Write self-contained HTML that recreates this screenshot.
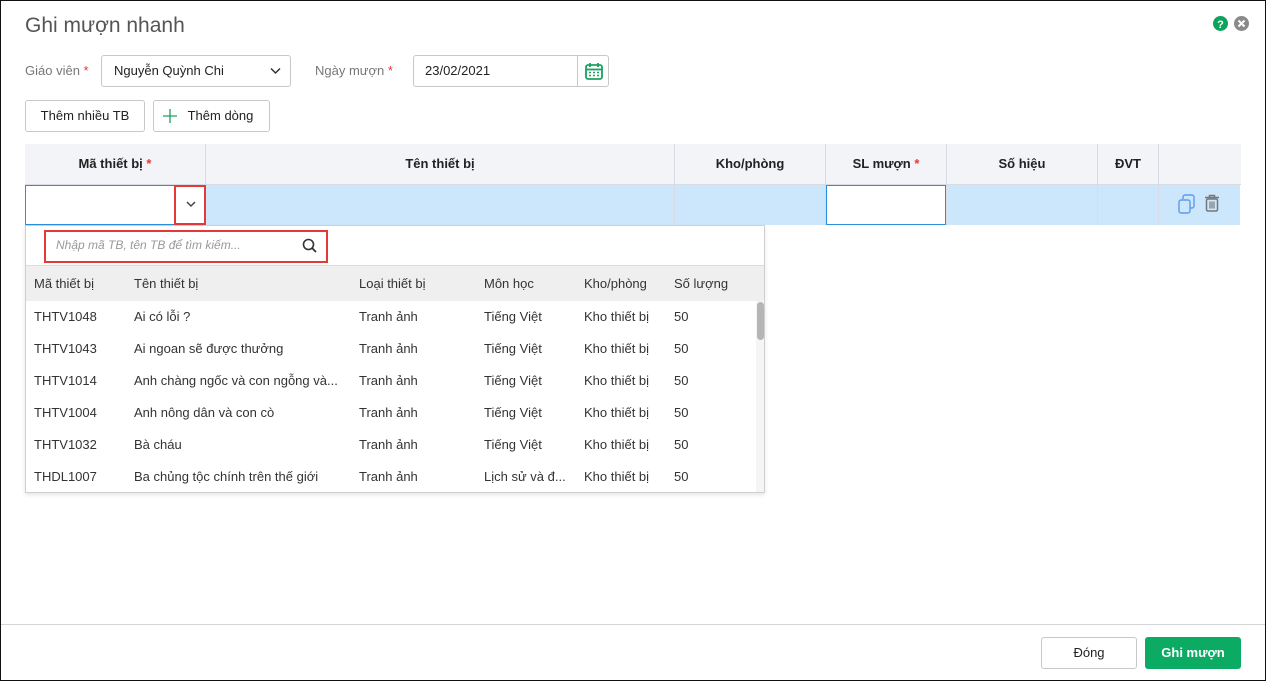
<!DOCTYPE html>
<html><head><meta charset="utf-8"><style>
*{box-sizing:border-box;margin:0;padding:0}
body{width:1266px;height:681px;overflow:hidden;background:#fff;font-family:"Liberation Sans","DejaVu Sans",sans-serif;font-size:13px;color:#212121;position:relative}
.a{position:absolute}
.frame{left:0;top:0;width:1266px;height:681px;border:1px solid #111;border-top-width:1px}
.title{left:25px;top:14px;font-size:21px;color:#555}
.lbl{color:#777;font-size:13px}
.req{color:#e53935}
.box{border:1px solid #c8c8c8;border-radius:3px;background:#fff}
.btn{border:1px solid #c8c8c8;border-radius:3px;background:#fff;text-align:center;line-height:29px;font-size:13px;color:#222}
.th{top:144px;height:40px;background:#f3f4f8;border-right:1px solid #d9dbe3;text-align:center;line-height:40px;font-weight:bold;font-size:13px;color:#222}
.td{top:185px;height:40px;background:#cce6fb;border-right:1px solid #d9dbe3}
.dd{left:25px;top:225px;width:740px;height:268px;border:1px solid #cfcfcf;background:#fff;box-shadow:0 2px 4px rgba(0,0,0,.1);overflow:hidden}
.row{position:absolute;left:0;width:730px;height:32px;line-height:32px;font-size:13px;color:#333}
.row span{position:absolute;white-space:nowrap}
</style></head><body>
<div class="a frame"></div>
<div class="a title">Ghi mượn nhanh</div>
<svg class="a" style="left:1213px;top:16px" width="15" height="15"><circle cx="7.5" cy="7.5" r="7.5" fill="#0da35c"/><text x="7.5" y="12" font-size="11" font-weight="bold" fill="#fff" text-anchor="middle" font-family="Liberation Sans">?</text></svg>
<svg class="a" style="left:1234px;top:16px" width="15" height="15"><circle cx="7.5" cy="7.5" r="7.5" fill="#8a8a8a"/><path d="M4.5 4.5l6 6M10.5 4.5l-6 6" stroke="#fff" stroke-width="2"/></svg>

<div class="a lbl" style="left:25px;top:63px">Giáo viên <span class="req">*</span></div>
<div class="a box" style="left:101px;top:55px;width:190px;height:32px"></div>
<div class="a" style="left:114px;top:63px;color:#222">Nguyễn Quỳnh Chi</div>
<svg class="a" style="left:270px;top:67px" width="11" height="8"><path d="M1 1.5l4.5 4.5 4.5-4.5" stroke="#333" stroke-width="1.5" fill="none"/></svg>
<div class="a lbl" style="left:315px;top:63px">Ngày mượn <span class="req">*</span></div>
<div class="a box" style="left:413px;top:55px;width:196px;height:32px"></div>
<div class="a" style="left:577px;top:56px;width:1px;height:30px;background:#c8c8c8"></div>
<div class="a" style="left:425px;top:63px;color:#222">23/02/2021</div>
<svg class="a" style="left:584px;top:61px" width="20" height="20"><rect x="2" y="4" width="16" height="14" rx="2" fill="none" stroke="#1aa260" stroke-width="1.8"/><line x1="2" y1="8.5" x2="18" y2="8.5" stroke="#1aa260" stroke-width="1.8"/><path d="M6 2v4M14 2v4" stroke="#1aa260" stroke-width="1.8"/><path d="M5 11.5h2M9 11.5h2M13 11.5h2M5 14.5h2M9 14.5h2M13 14.5h2" stroke="#1aa260" stroke-width="1.5"/></svg>

<div class="a btn" style="left:25px;top:100px;width:120px;height:32px">Thêm nhiều TB</div>
<div class="a btn" style="left:153px;top:100px;width:117px;height:32px;padding-left:18px">Thêm dòng</div>
<svg class="a" style="left:163px;top:109px" width="14" height="14"><path d="M7 0v14M0 7h14" stroke="#1aa260" stroke-width="1.3"/></svg>

<div class="a th" style="left:25px;width:181px">Mã thiết bị <span class="req">*</span></div>
<div class="a th" style="left:206px;width:469px">Tên thiết bị</div>
<div class="a th" style="left:675px;width:151px">Kho/phòng</div>
<div class="a th" style="left:826px;width:121px">SL mượn <span class="req">*</span></div>
<div class="a th" style="left:947px;width:151px">Số hiệu</div>
<div class="a th" style="left:1098px;width:61px">ĐVT</div>
<div class="a th" style="left:1159px;width:82px;border-right:none"></div>
<div class="a" style="left:25px;top:184px;width:1216px;height:1px;background:#d9dbe3"></div>

<div class="a td" style="left:206px;width:469px"></div>
<div class="a td" style="left:675px;width:151px"></div>
<div class="a td" style="left:826px;width:121px"></div>
<div class="a td" style="left:947px;width:151px"></div>
<div class="a td" style="left:1098px;width:61px"></div>
<div class="a td" style="left:1159px;width:81px;border-right:none"></div>
<div class="a" style="left:25px;top:185px;width:181px;height:40px;background:#fff;border:1px solid #2b8fe0"></div>
<div class="a" style="left:174px;top:185px;width:32px;height:40px;border:2px solid #e53935;background:#fff"></div>
<svg class="a" style="left:186px;top:201px" width="10" height="7"><path d="M1 1l4 4 4-4" stroke="#444" stroke-width="1.5" fill="none"/></svg>
<div class="a" style="left:826px;top:185px;width:120px;height:40px;background:#fff;border:1px solid #2b8fe0"></div>
<svg class="a" style="left:1178px;top:194px" width="20" height="22"><rect x="1" y="6" width="11" height="13" rx="2" fill="none" stroke="#5b9cf0" stroke-width="1.4"/><path d="M5 5V3a2 2 0 0 1 2-2h7a2 2 0 0 1 2 2v9a2 2 0 0 1-2 2h-2" fill="none" stroke="#5b9cf0" stroke-width="1.4"/></svg>
<svg class="a" style="left:1204px;top:194px" width="16" height="18"><path d="M1 3.5h14M5.5 3.5V1.5h5v2" fill="none" stroke="#777" stroke-width="1.5"/><rect x="2.5" y="5" width="11" height="12" rx="1.5" fill="none" stroke="#777" stroke-width="1.5"/><path d="M6 7.5v7M8 7.5v7M10 7.5v7" stroke="#777" stroke-width="1.2"/></svg>

<div class="a dd">
 <div class="a" style="left:18px;top:4px;width:284px;height:33px;border:2px solid #e53935"></div>
 <div class="a" style="left:30px;top:12px;font-style:italic;color:#999;font-size:12px">Nhập mã TB, tên TB để tìm kiếm...</div>
 <svg class="a" style="left:276px;top:12px" width="16" height="16"><circle cx="6.5" cy="6.5" r="5" fill="none" stroke="#333" stroke-width="1.6"/><path d="M10 10l4 4" stroke="#333" stroke-width="1.8"/></svg>
 <div class="a" style="left:0;top:39px;width:740px;height:36px;background:#efefef;border-top:1px solid #ddd"></div>
 <div class="row" style="top:41px;height:34px;line-height:34px;color:#333"><span style="left:8px">Mã thiết bị</span><span style="left:108px">Tên thiết bị</span><span style="left:333px">Loại thiết bị</span><span style="left:458px">Môn học</span><span style="left:558px">Kho/phòng</span><span style="left:648px">Số lượng</span></div>
 <div class="row" style="top:75px"><span style="left:8px">THTV1048</span><span style="left:108px">Ai có lỗi ?</span><span style="left:333px">Tranh ảnh</span><span style="left:458px">Tiếng Việt</span><span style="left:558px">Kho thiết bị</span><span style="left:648px">50</span></div>
 <div class="row" style="top:107px"><span style="left:8px">THTV1043</span><span style="left:108px">Ai ngoan sẽ được thưởng</span><span style="left:333px">Tranh ảnh</span><span style="left:458px">Tiếng Việt</span><span style="left:558px">Kho thiết bị</span><span style="left:648px">50</span></div>
 <div class="row" style="top:139px"><span style="left:8px">THTV1014</span><span style="left:108px">Anh chàng ngốc và con ngỗng và...</span><span style="left:333px">Tranh ảnh</span><span style="left:458px">Tiếng Việt</span><span style="left:558px">Kho thiết bị</span><span style="left:648px">50</span></div>
 <div class="row" style="top:171px"><span style="left:8px">THTV1004</span><span style="left:108px">Anh nông dân và con cò</span><span style="left:333px">Tranh ảnh</span><span style="left:458px">Tiếng Việt</span><span style="left:558px">Kho thiết bị</span><span style="left:648px">50</span></div>
 <div class="row" style="top:203px"><span style="left:8px">THTV1032</span><span style="left:108px">Bà cháu</span><span style="left:333px">Tranh ảnh</span><span style="left:458px">Tiếng Việt</span><span style="left:558px">Kho thiết bị</span><span style="left:648px">50</span></div>
 <div class="row" style="top:235px"><span style="left:8px">THDL1007</span><span style="left:108px">Ba chủng tộc chính trên thế giới</span><span style="left:333px">Tranh ảnh</span><span style="left:458px">Lịch sử và đ...</span><span style="left:558px">Kho thiết bị</span><span style="left:648px">50</span></div>
 <div class="a" style="left:730px;top:75px;width:9px;height:193px;background:#f5f5f5"></div>
 <div class="a" style="left:731px;top:76px;width:7px;height:38px;border-radius:4px;background:#b5b5b5"></div>
</div>

<div class="a" style="left:1px;top:624px;width:1264px;height:1px;background:#d5d5d5"></div>
<div class="a btn" style="left:1041px;top:637px;width:96px;height:32px;line-height:30px">Đóng</div>
<div class="a btn" style="left:1145px;top:637px;width:96px;height:32px;line-height:30px;background:#0bab64;border-color:#0bab64;color:#fff;font-weight:bold">Ghi mượn</div>
</body></html>
